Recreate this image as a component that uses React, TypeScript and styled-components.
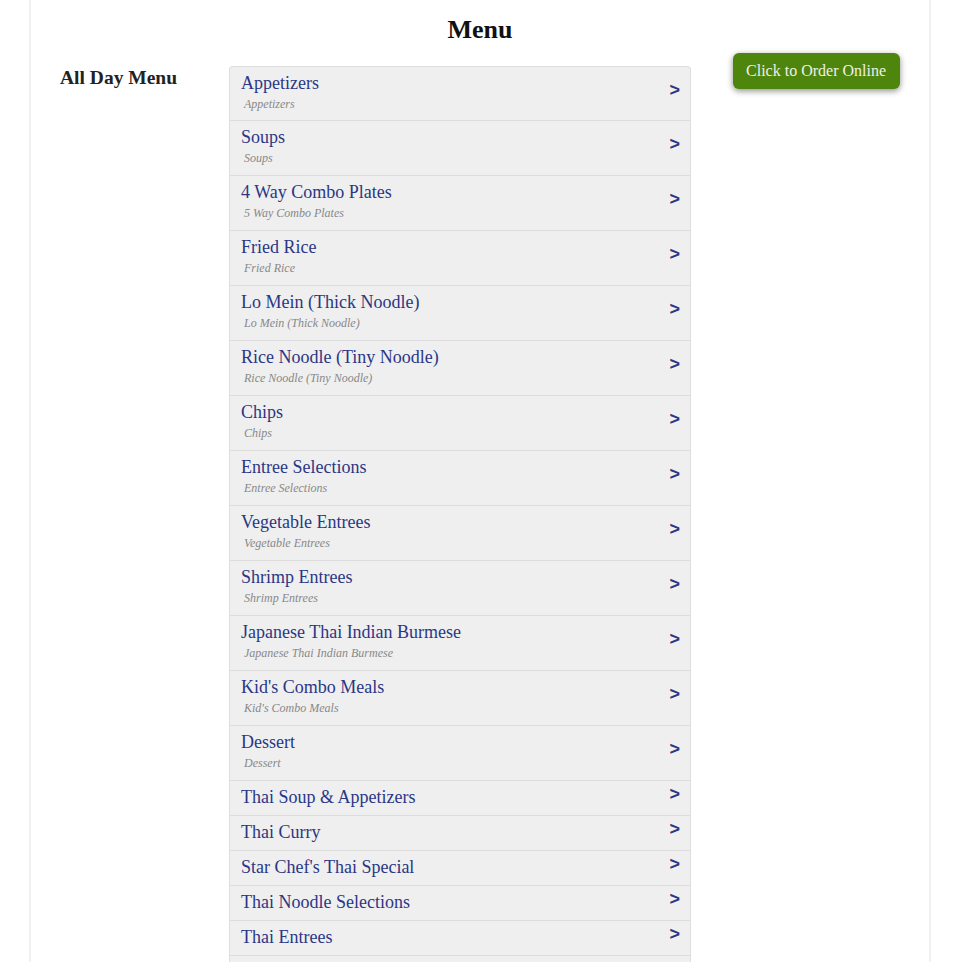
import React from "react";
import styled, { createGlobalStyle } from "styled-components";

const GlobalStyle = createGlobalStyle`
  html, body { margin: 0; padding: 0; background: #ffffff; }
  body { font-family: "Liberation Serif", "Times New Roman", serif; color: #222; }
`;

const Page = styled.div`
  width: 840px;
  margin: 0 auto;
  min-height: 962px;
  border-left: 2px solid #f1f1f1;
  border-right: 2px solid #f1f1f1;
  padding: 0 29px;
  box-sizing: content-box;
`;

const PageTitle = styled.h1`
  margin: 0;
  padding-top: 15px;
  text-align: center;
  font-size: 26px;
  line-height: 30px;
  font-weight: bold;
  color: #111;
`;

const Body = styled.div`
  display: flex;
  align-items: flex-start;
  margin-top: 8px;
`;

const SideCol = styled.div`
  width: 169px;
  flex: none;
`;

const SectionName = styled.h2`
  margin: 0;
  padding-top: 14px;
  font-size: 19.5px;
  line-height: 22px;
  font-weight: bold;
  color: #222;
`;

const List = styled.div`
  width: 460px;
  flex: none;
  margin-top: 13px;
  background: #efefef;
  border: 1px solid #dedede;
  border-bottom: none;
  border-radius: 4px 4px 0 0;
`;

const Row = styled.a<{ $first?: boolean }>`
  display: flex;
  align-items: center;
  padding: ${(p) => (p.$first ? "6px 10px 7px 11px" : "6px 10px 8px 11px")};
  border-top: ${(p) => (p.$first ? "none" : "1px solid #dcdcdc")};
  text-decoration: none;
  cursor: pointer;
`;

const TextBlock = styled.div`
  flex: 1;
  min-width: 0;
`;

const ItemTitle = styled.div`
  font-size: 18px;
  line-height: 20px;
  color: #2b3785;
`;

const ItemSub = styled.div`
  margin-top: 2px;
  padding-left: 3px;
  font-style: italic;
  font-size: 12px;
  line-height: 18px;
  color: #888888;
`;

const Arrow = styled.span`
  flex: none;
  position: relative;
  top: -3px;
  font-family: "Liberation Sans", Arial, sans-serif;
  font-weight: bold;
  font-size: 18px;
  line-height: 20px;
  color: #2b3785;
`;

const RightCol = styled.div`
  flex: 1;
  display: flex;
  justify-content: flex-end;
`;

const OrderButton = styled.button`
  height: 36px;
  padding: 0 14px 0 13px;
  border: none;
  border-radius: 6px;
  background: #4e850c;
  color: #f0f0e8;
  font-family: "Liberation Serif", "Times New Roman", serif;
  font-size: 16px;
  box-shadow: 0 2px 6px rgba(0, 0, 0, 0.45);
  cursor: pointer;
`;

type Item = { title: string; sub?: string };

const items: Item[] = [
  { title: "Appetizers", sub: "Appetizers" },
  { title: "Soups", sub: "Soups" },
  { title: "4 Way Combo Plates", sub: "5 Way Combo Plates" },
  { title: "Fried Rice", sub: "Fried Rice" },
  { title: "Lo Mein (Thick Noodle)", sub: "Lo Mein (Thick Noodle)" },
  { title: "Rice Noodle (Tiny Noodle)", sub: "Rice Noodle (Tiny Noodle)" },
  { title: "Chips", sub: "Chips" },
  { title: "Entree Selections", sub: "Entree Selections" },
  { title: "Vegetable Entrees", sub: "Vegetable Entrees" },
  { title: "Shrimp Entrees", sub: "Shrimp Entrees" },
  { title: "Japanese Thai Indian Burmese", sub: "Japanese Thai Indian Burmese" },
  { title: "Kid's Combo Meals", sub: "Kid's Combo Meals" },
  { title: "Dessert", sub: "Dessert" },
  { title: "Thai Soup & Appetizers" },
  { title: "Thai Curry" },
  { title: "Star Chef's Thai Special" },
  { title: "Thai Noodle Selections" },
  { title: "Thai Entrees" },
  { title: "Thai Fried Rice" },
];

export default function App() {
  return (
    <>
      <GlobalStyle />
      <Page>
        <PageTitle>Menu</PageTitle>
        <Body>
          <SideCol>
            <SectionName>All Day Menu</SectionName>
          </SideCol>
          <List>
            {items.map((it, i) => (
              <Row key={it.title} $first={i === 0}>
                <TextBlock>
                  <ItemTitle>{it.title}</ItemTitle>
                  {it.sub && <ItemSub>{it.sub}</ItemSub>}
                </TextBlock>
                <Arrow>&gt;</Arrow>
              </Row>
            ))}
          </List>
          <RightCol>
            <OrderButton>Click to Order Online</OrderButton>
          </RightCol>
        </Body>
      </Page>
    </>
  );
}
